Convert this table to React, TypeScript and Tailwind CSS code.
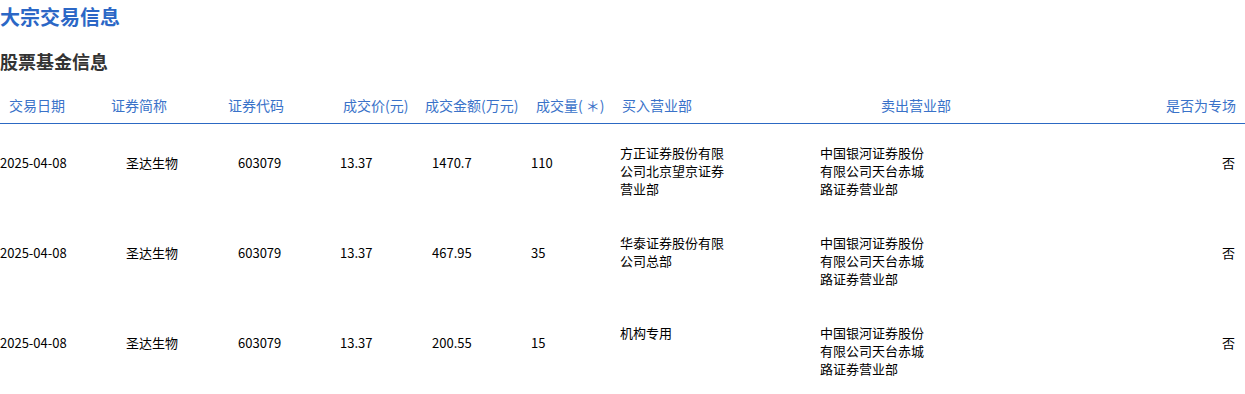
import React from 'react';

type Row = {
  date: string;
  name: string;
  code: string;
  price: string;
  amount: string;
  volume: string;
  buyer: string;
  seller: string;
  special: string;
};

const rows: Row[] = [
  {
    date: '2025-04-08',
    name: '圣达生物',
    code: '603079',
    price: '13.37',
    amount: '1470.7',
    volume: '110',
    buyer: '方正证券股份有限公司北京望京证券营业部',
    seller: '中国银河证券股份有限公司天台赤城路证券营业部',
    special: '否',
  },
  {
    date: '2025-04-08',
    name: '圣达生物',
    code: '603079',
    price: '13.37',
    amount: '467.95',
    volume: '35',
    buyer: '华泰证券股份有限公司总部',
    seller: '中国银河证券股份有限公司天台赤城路证券营业部',
    special: '否',
  },
  {
    date: '2025-04-08',
    name: '圣达生物',
    code: '603079',
    price: '13.37',
    amount: '200.55',
    volume: '15',
    buyer: '机构专用',
    seller: '中国银河证券股份有限公司天台赤城路证券营业部',
    special: '否',
  },
];

const font = { fontFamily: '"Noto Sans CJK SC", "Noto Sans", sans-serif' };

const App = () => {
  return (
    <div className="w-[1245px] h-[394px] bg-white overflow-hidden" style={font}>
      {/* Titles */}
      <h1 className="text-[20px] leading-[34px] font-bold text-[#2b67c6]">大宗交易信息</h1>
      <h2 className="mt-[13px] text-[18px] leading-[28px] font-bold text-[#333333]">股票基金信息</h2>

      {/* Table header */}
      <div className="mt-[13px] flex h-[36px] items-center border-b border-[#2c69c3] text-[14px] text-[#3a72c9]">
        <div className="w-[90px] pl-[9px]">交易日期</div>
        <div className="w-[120px] pl-[21px]">证券简称</div>
        <div className="w-[110px] pl-[18px]">证券代码</div>
        <div className="w-[100px] pl-[23px]">成交价(元)</div>
        <div className="w-[108px] pl-[5px]">成交金额(万元)</div>
        <div className="w-[87px] pl-[8px] whitespace-pre">成交量( ＊)</div>
        <div className="w-[200px] pl-[7px]">买入营业部</div>
        <div className="w-[285px] pl-[66px]">卖出营业部</div>
        <div className="flex-1 pr-[9px] text-right">是否为专场</div>
      </div>

      {/* Table body */}
      {rows.map((r, i) => (
        <div key={i} className="flex h-[90px] text-[13px] leading-[18px] text-black">
          <div className="w-[90px] pt-[30px]">{r.date}</div>
          <div className="w-[120px] pt-[30px] pl-[36px]">{r.name}</div>
          <div className="w-[110px] pt-[30px] pl-[28px]">{r.code}</div>
          <div className="w-[100px] pt-[30px] pl-[20px]">{r.price}</div>
          <div className="w-[108px] pt-[30px] pl-[12px]">{r.amount}</div>
          <div className="w-[87px] pt-[30px] pl-[3px]">{r.volume}</div>
          <div className="w-[200px] pt-[20px] pl-[5px]">
            <div className="w-[106px] break-all">{r.buyer}</div>
          </div>
          <div className="w-[285px] pt-[20px] pl-[5px]">
            <div className="w-[106px] break-all">{r.seller}</div>
          </div>
          <div className="flex-1 pt-[30px] pr-[10px] text-right">{r.special}</div>
        </div>
      ))}
    </div>
  );
};

export default App;
